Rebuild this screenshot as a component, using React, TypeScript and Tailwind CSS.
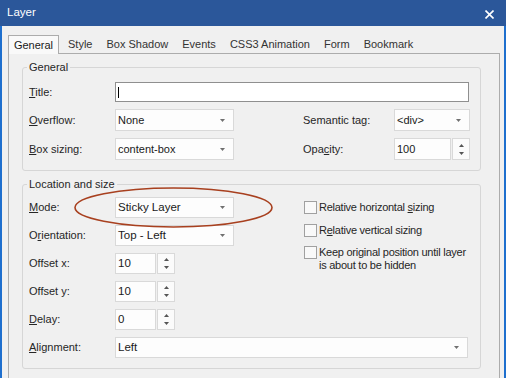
import React from "react";

const Arrow = () => (
  <svg width="5" height="3" viewBox="0 0 5 3" className="shrink-0">
    <path d="M0 0h5L2.5 3z" fill="#707070" />
  </svg>
);

function Select({ w, children, big }: { w: string; children: React.ReactNode; big?: boolean }) {
  return (
    <div
      className={`${w} h-full border border-[#d9d9d9] bg-[#fdfdfd] flex items-center justify-between pl-[2px] pr-[8px] text-[#1a1a1a] ${
        big ? "text-[11.5px]" : "text-[11px]"
      }`}
    >
      <span>{children}</span>
      <Arrow />
    </div>
  );
}

function Spin({ w, children, big }: { w: string; children: React.ReactNode; big?: boolean }) {
  return (
    <div className="flex h-full gap-[1px]">
      <div
        className={`${w} h-full border border-[#d9d9d9] bg-[#fdfdfd] flex items-center pl-[2px] text-[#1a1a1a] ${
          big ? "text-[11.5px]" : "text-[11px]"
        }`}
      >
        {children}
      </div>
      <div className="w-[18px] h-full border border-[#d9d9d9] bg-[#fbfbfb] flex flex-col items-center justify-center gap-[5px]">
        <svg width="5" height="3" viewBox="0 0 5 3">
          <path d="M0 3h5L2.5 0z" fill="#555" />
        </svg>
        <svg width="5" height="3" viewBox="0 0 5 3">
          <path d="M0 0h5L2.5 3z" fill="#555" />
        </svg>
      </div>
    </div>
  );
}

function Check({ children }: { children: React.ReactNode }) {
  return (
    <div className="flex items-start gap-[1px]">
      <div className="w-[13px] h-[13px] border border-[#a0a0a0] bg-[#f9f9f9] shrink-0" />
      <div className="leading-[13px] pl-[1px] text-[#262626] tracking-[-0.25px]">{children}</div>
    </div>
  );
}

function Group({ title, children }: { title: string; children: React.ReactNode }) {
  return (
    <div className="relative w-[459px] border border-[#d6d6d6] rounded-[3px]">
      <div className="absolute -top-[7px] left-[4px] px-[2px] bg-[#f0f0f0] leading-[13px] text-[#262626]">
        {title}
      </div>
      {children}
    </div>
  );
}

export default function App() {
  return (
    <div className="relative w-[506px] h-[378px] overflow-hidden bg-[#f0f0f0] flex flex-col font-['Liberation_Sans',Arial,sans-serif] text-[11px] text-[#262626]">
      <div className="h-[26px] shrink-0 bg-[#2b579a] flex items-center justify-between pl-[7px] pr-[12px]">
        <span className="text-white text-[11.5px]">Layer</span>
        <svg width="9" height="9" viewBox="0 0 9 9" className="mt-[3px]">
          <path d="M0.5 0.5L8.5 8.5M8.5 0.5L0.5 8.5" stroke="#fff" strokeWidth="1.6" />
        </svg>
      </div>
      <div className="flex-1 border-l-2 border-r-2 border-[#1e6fce] pl-[6px] pt-[9px]">
        <div className="flex items-end h-[18px] text-[#333]">
          <div className="relative z-10 h-[19px] -mb-px w-[51px] border-t border-l border-r border-[#acacac] bg-[#f9f9f9] flex items-center justify-center text-[#1a1a1a]">
            General
          </div>
          <div className="ml-[2px] flex items-center h-[18px]">
            {["Style", "Box Shadow", "Events", "CSS3 Animation", "Form", "Bookmark"].map((t) => (
              <div key={t} className="px-[7px]">
                {t}
              </div>
            ))}
          </div>
        </div>
        <div className="w-[492px] h-[340px] border border-[#acacac] bg-[#f0f0f0] pl-[13px] pt-[13px]">
          <Group title="General">
            <div className="pt-[14px] pb-[10px] pl-[6px] flex flex-col gap-[7px]">
              <div className="flex items-center h-[20px]">
                <div className="w-[86px]">
                  <span className="underline">T</span>itle:
                </div>
                <div className="w-[354px] h-full border border-[#8f8f8f] bg-white flex items-center pl-[2px]">
                  <div className="w-px h-[11px] bg-black" />
                </div>
              </div>
              <div className="flex items-center h-[22px]">
                <div className="w-[86px]">
                  <span className="underline">O</span>verflow:
                </div>
                <Select w="w-[119px]">None</Select>
                <div className="w-[69px]" />
                <div className="w-[91px]">Semantic tag:</div>
                <Select w="w-[76px]">&lt;div&gt;</Select>
              </div>
              <div className="flex items-center h-[22px]">
                <div className="w-[86px]">
                  <span className="underline">B</span>ox sizing:
                </div>
                <Select w="w-[119px]">content-box</Select>
                <div className="w-[69px]" />
                <div className="w-[91px]">
                  Opa<span className="underline">c</span>ity:
                </div>
                <Spin w="w-[57px]">100</Spin>
              </div>
            </div>
          </Group>
          <div className="mt-[13px]">
            <Group title="Location and size">
              <div className="pt-[12px] pb-[10px] pl-[6px]">
                <div className="flex">
                  <div className="w-[205px] flex flex-col gap-[7px]">
                    <div className="flex items-center h-[21px]">
                      <div className="w-[86px]">
                        <span className="underline">M</span>ode:
                      </div>
                      <Select w="w-[119px]" big>
                        Sticky Layer
                      </Select>
                    </div>
                    <div className="flex items-center h-[21px]">
                      <div className="w-[86px]">
                        O<span className="underline">r</span>ientation:
                      </div>
                      <Select w="w-[119px]" big>
                        Top - Left
                      </Select>
                    </div>
                    <div className="flex items-center h-[21px]">
                      <div className="w-[86px]">Offset x:</div>
                      <Spin w="w-[41px]" big>
                        10
                      </Spin>
                    </div>
                    <div className="flex items-center h-[21px]">
                      <div className="w-[86px]">Offset y:</div>
                      <Spin w="w-[41px]" big>
                        10
                      </Spin>
                    </div>
                    <div className="flex items-center h-[21px]">
                      <div className="w-[86px]">
                        <span className="underline">D</span>elay:
                      </div>
                      <Spin w="w-[41px]" big>
                        0
                      </Spin>
                    </div>
                  </div>
                  <div className="ml-[70px] pt-[4px] flex flex-col">
                    <Check>
                      Relative horizontal <span className="underline">s</span>izing
                    </Check>
                    <div className="mt-[10px]">
                      <Check>
                        R<span className="underline">e</span>lative vertical sizing
                      </Check>
                    </div>
                    <div className="mt-[9px]">
                      <Check>
                        Keep original position until layer
                        <br />
                        is about to be hidden
                      </Check>
                    </div>
                  </div>
                </div>
                <div className="flex items-center h-[21px] mt-[7px]">
                  <div className="w-[86px]">
                    <span className="underline">A</span>lignment:
                  </div>
                  <Select w="w-[353px]" big>
                    Left
                  </Select>
                </div>
              </div>
            </Group>
          </div>
        </div>
      </div>
      <svg className="absolute left-0 top-0 pointer-events-none" width="506" height="378">
        <ellipse cx="173.5" cy="207.5" rx="98.5" ry="19.5" fill="none" stroke="#a8401f" strokeWidth="1.6" />
      </svg>
    </div>
  );
}
